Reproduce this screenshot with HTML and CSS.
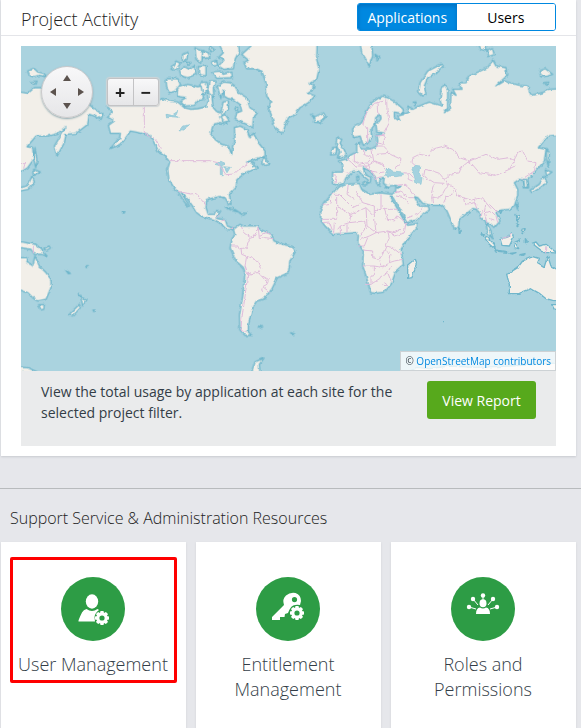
FILE: index.html
```html
<!DOCTYPE html>
<html lang="en">
<head>
<meta charset="utf-8">
<title>Project Activity</title>
<link rel="stylesheet" href="styles.css">
</head>
<body>
<main>
<section class="panel">
  <header class="panel-head">
    <h2>Project Activity</h2>
    <div class="toggle">
      <button type="button" class="active">Applications</button>
      <button type="button">Users</button>
    </div>
  </header>
  <div class="panel-body">
    <div class="map">
      <svg class="world" viewBox="0 0 1605 975" role="img" aria-label="World map">
        <defs>
          <filter id="coast" x="0" y="0" width="1605" height="975" filterUnits="userSpaceOnUse">
            <feTurbulence type="fractalNoise" baseFrequency="0.07" numOctaves="2" seed="4"/>
            <feDisplacementMap in="SourceGraphic" scale="10" xChannelSelector="R" yChannelSelector="G"/>
          </filter>
        </defs>
        <rect class="sea" width="1605" height="975"/>
        <g filter="url(#coast)">
        <g class="land">
          <!-- North America -->
          <path d="M260 182L275 198L258 212L280 225L262 238L268 262L298 262L296 275L268 308L300 295L318 270L328 255L345 258L372 265L388 270L400 292L412 315L428 325L446 348L440 370L443 400L462 430L472 437L485 460L502 484L506 482L490 456L480 438L500 460L520 488L527 500L540 510L567 518L582 522L602 535L617 550L634 552L640 550L637 546L619 540L613 522L595 518L585 515L599 495L585 494L579 505L562 505L555 485L557 460L582 455L597 452L612 455L622 472L630 475L625 445L645 425L647 402L672 380L687 375L710 366L697 358L700 350L677 348L707 338L732 332L732 315L712 290L697 262L687 275L677 250L657 240L640 245L642 285L635 300L632 325L622 300L602 295L582 280L569 265L577 235L597 230L618 235L602 205L622 190L622 165L606 168L600 200L586 196L577 185L572 145L559 140L562 165L557 182L530 188L510 190L490 185L470 168L445 165L425 158L400 165L300 150L275 165Z"/>
          <!-- Eurasia, eastern edge -->
          <path d="M-20 135L20 142L40 125L60 125L150 150L205 175L218 188L245 205L240 220L220 210L205 205L200 235L165 262L135 265L130 290L108 330L100 300L115 275L135 242L110 262L80 270L45 270L18 302L35 305L38 340L20 365L-20 390Z"/>
          <!-- Eurasia and Africa -->
          <path d="M1085 150L1077 153L1052 170L1032 205L1022 230L995 245L997 275L1017 270L1027 298L1042 290L1052 270L1049 250L1062 235L1064 215L1077 205L1080 215L1065 235L1067 258L1090 261L1068 268L1070 285L1067 300L1052 308L1027 310L1017 304L1018 288L1007 295L1007 318L987 328L977 338L952 345L965 355L965 378L935 378L934 412L949 418L967 412L975 395L987 385L997 375L1012 375L1027 390L1042 402L1040 412L1048 408L1049 398L1030 380L1027 365L1047 375L1062 392L1067 412L1075 418L1077 400L1090 394L1087 412L1100 420L1125 418L1123 440L1112 445L1077 440L1047 445L1022 430L1015 412L977 415L949 425L932 445L907 475L899 490L899 522L912 540L937 565L977 562L1007 560L1012 570L1010 590L1027 615L1025 660L1035 690L1049 740L1065 742L1090 738L1110 715L1125 675L1147 655L1140 610L1155 585L1190 540L1187 533L1160 538L1150 525L1130 490L1108 450L1116 452L1140 495L1157 530L1185 522L1225 492L1222 481L1195 480L1180 452L1190 455L1205 472L1230 478L1260 478L1275 490L1280 500L1300 548L1313 542L1315 520L1355 488L1370 490L1380 515L1393 525L1400 560L1415 578L1410 555L1397 530L1410 535L1420 545L1437 525L1425 500L1440 492L1465 490L1480 480L1490 450L1490 430L1480 410L1495 400L1505 402L1510 425L1523 425L1520 398L1540 380L1570 345L1575 310L1552 305L1580 270L1625 266L1625 128L1585 130L1565 140L1530 148L1520 120L1495 118L1450 105L1425 120L1457 90L1455 65L1425 60L1415 42L1400 65L1345 90L1335 110L1315 110L1320 130L1295 130L1305 148L1290 138L1288 190L1270 200L1280 186L1280 130L1270 115L1260 130L1257 160L1263 180L1225 168L1195 180L1175 190L1160 180L1165 198L1150 205L1130 210L1137 225L1120 215L1120 198L1145 203L1147 190L1125 170L1100 155Z"/>
          <!-- Greenland and Atlantic islands -->
          <g transform="translate(537 0)">
            <path d="M125 25L153 0L160 -20L352 -20L350 40L357 70L350 100L330 112L345 125L322 140L345 150L325 170L300 185L285 205L265 215L255 240L248 262L235 255L222 238L215 210L205 185L212 168L200 150L198 110L185 75L165 68L140 68L132 50L145 42Z"/>
            <path d="M332 205L345 212L370 200L378 212L360 230L340 228L345 218Z"/>
            <path d="M412 275L425 280L420 292L432 310L440 328L412 335L420 318L412 305L408 290ZM398 305L410 303L408 325L392 327Z"/>
            <path d="M480 -10H515L518 30L507 60L495 35L485 20ZM525 25L540 35L530 45Z"/>
            <path d="M185 350L190 332L210 355L195 358Z"/>
            <path d="M52 120L70 108L90 110L105 120L115 140L140 155L150 185L172 200L160 215L158 245L140 235L105 220L110 200L125 195L120 175L100 160L85 158L72 150L70 130L62 158Z"/>
            <path d="M0 110L20 108L25 130L10 145L0 138ZM30 105L48 105L40 125L42 155L25 140Z"/>
            <path d="M55 -10H115L118 15L105 40L100 68L70 70L55 60L72 42L56 34L70 20Z"/>
            <path d="M35 78L60 75L70 85L95 78L97 95L50 97ZM-5 62L18 60L18 90L-4 85ZM0 12L25 20L30 35L5 38ZM30 0L42 10L32 18ZM35 48L50 42L52 58L40 60ZM105 186L113 184L112 194L106 193ZM62 212L76 205L88 225L70 228Z"/>
            <path d="M470 392L476 390L476 403L471 404ZM488 410L500 408L500 416L490 416Z"/>
          </g>
          <!-- Canadian archipelago -->
          <path d="M435 98L470 98L478 115L465 135L445 140L437 125ZM470 125L500 115L530 122L540 120L548 160L530 165L520 178L490 180L478 165L495 155L468 150Z"/>
          <path d="M450 70L465 45L478 52L465 72ZM475 70L490 62L505 70L520 60L525 85L500 95L480 90ZM485 25L500 18L498 40L484 50ZM522 5L545 15L542 50L525 40ZM495 48L510 50L500 58Z"/>
          <path d="M20 75L40 68L50 78L68 82L78 92L55 88L40 92L25 90ZM30 108L45 105L42 115Z"/>
          <path d="M42 305L48 345L44 365L38 340ZM38 370L58 378L40 388ZM33 390L40 408L22 430L-20 438V428L20 420Z"/>
          <!-- Russian Arctic and Japan -->
          <g transform="translate(1065 0)">
            <path d="M140 150L128 138L132 110L155 75L195 55L202 60L180 80L155 95L145 120L150 145Z"/>
            <path d="M512 310L520 320L517 362L512 340ZM508 372L528 378L512 390ZM505 390L512 410L485 430L468 440L462 433L490 415ZM442 400L450 400L456 425L446 422ZM420 475L426 474L424 490Z"/>
            <path d="M305 -10H330L332 15L315 10ZM335 12L348 5L355 25L338 32ZM490 75L508 68L530 85L515 90L495 92ZM505 110L518 108L512 118ZM0 30L8 38L0 45ZM112 168L120 168L118 178Z"/>
            <path d="M25 420L40 423L30 426ZM62 424L72 420L66 427Z"/>
          </g>
          <!-- South America and Caribbean -->
          <g transform="translate(537 480)">
            <path d="M100 70L120 55L130 60L170 60L180 70L215 85L222 105L250 115L280 122L287 135L270 165L265 200L232 215L215 250L190 280L170 285L160 300L155 320L150 335L145 360L145 378L155 388L135 388L120 372L118 330L128 270L135 200L130 185L108 165L90 125L95 105L104 85Z"/>
            <path d="M76 3L100 8L116 18L95 13ZM118 20L138 22L130 28ZM175 360L188 363L178 366ZM272 380L284 384L276 386Z"/>
            <path d="M155 500L165 468L192 456L178 475L180 500Z"/>
          </g>
          <!-- Western Pacific -->
          <g transform="translate(0 480)">
            <path d="M-20 108H5L25 112L45 115L60 130L78 150L60 145L40 145L30 130L-20 122ZM68 130L84 120L88 126L76 133Z"/>
            <path d="M-20 155H20L18 170L35 178L42 150L55 180L75 200L90 220L90 245L75 280L50 285L35 275L20 260L-20 245Z"/>
            <path d="M53 296L70 296L68 310L60 312ZM172 262L182 275L198 280L185 300L182 284ZM175 295L178 305L155 330L145 325ZM134 192L148 202L142 203ZM304 18H311L308 22ZM194 179H202L196 185ZM216 312H219V317Z"/>
            <path d="M-20 483L20 485L55 500H-20Z"/>
          </g>
          <!-- Australia and the Indian Ocean -->
          <g transform="translate(1065 480)">
            <path d="M392 205L425 185L440 165L470 152L490 158L485 170L505 182L515 150L525 180L560 200V285L530 283L510 278L490 262L465 248L430 262L400 263L400 235Z"/>
            <path d="M468 112L480 108L490 120L510 115L535 135L560 142L525 140L505 140L485 125ZM372 98L390 95L408 80L412 95L400 120L378 118ZM315 80L330 90L355 115L358 130L340 115ZM358 132L395 138L395 142L360 138ZM402 142L420 140L410 144ZM432 146L450 142L438 148Z"/>
            <path d="M420 25L430 30L425 48ZM435 70L448 68L442 80ZM420 55L428 58L424 62ZM415 110L430 102L420 114L428 128L415 125ZM248 65L256 75L250 80ZM118 160L122 170L108 215L95 217L95 180ZM370 14L378 14L374 22ZM448 98L454 106L448 110ZM527 296H560V308L535 310ZM200 347H204"/>
            <path d="M90 500L125 484L160 488L220 480L300 484L400 480L560 470V500Z"/>
          </g>
        </g>
        <g class="lake">
          <path d="M1093 388L1100 366L1115 375L1145 378L1148 388L1125 392L1100 390Z"/>
          <path d="M1173 370L1183 358L1197 360L1193 380L1203 395L1200 415L1185 412L1180 390Z"/>
          <path d="M438 205L452 208L470 196L464 210L472 214L450 212L440 216ZM474 255L485 240L506 236L490 248Z"/>
          <path d="M582 355L598 346L612 355L600 360ZM598 362H604V386H598ZM608 362L628 364L618 380Z"/>
        </g>
        <g class="border">
          <path d="M370 150V262L385 272L405 280L418 308M446 344H565L590 350L615 386L640 384L652 372L672 362L680 348M472 436L508 444L525 442L540 460L555 478"/>
          <!-- Central and South America -->
          <path d="M585 515L595 508M602 525L612 520M637 542L634 552M661 540L668 560L688 575L676 605L660 608L662 625L680 632M688 575L700 570L712 545M712 545L715 578L732 575L757 578M715 570L735 560L750 565M632 600L650 600L655 610M677 630L672 660L680 685L690 680M680 632L712 645L722 668L712 680L724 690L742 700L738 715L725 722L748 740M680 685L708 680L712 672M680 685L675 730L668 780L662 820L660 850L678 858M724 735L722 725M712 680L735 705"/>
          <!-- Europe -->
          <path d="M1040 290V245L1025 235L1037 200L1060 172L1090 165M1068 172L1070 200L1077 205M1097 160L1098 190L1105 230L1090 260M936 386L946 388L942 412M965 378L985 382M978 338L992 350L1007 365M1000 322V345L1015 355L1040 350L1052 335L1028 325V310M1052 308L1058 345L1090 360M1010 360L1040 360L1062 345L1085 352L1095 370M1040 350L1050 375L1075 380L1090 378M1030 360L1055 380L1062 395M1065 270L1090 268V295L1065 290M1065 300L1085 300L1108 325L1140 340L1135 355L1122 365M1067 325L1105 322M1060 398L1085 392"/>
          <!-- Asia -->
          <path d="M1173 350L1175 335L1195 325L1225 330L1232 310L1270 300L1295 310L1315 335L1345 345L1375 380L1425 388L1465 370L1480 345L1465 335L1430 340L1395 325L1345 345L1320 365L1315 380L1285 385L1270 400L1280 415L1305 430L1310 450L1350 462L1385 455L1395 470L1410 488M1465 370L1485 360M1480 345L1490 318L1505 315L1520 345L1545 350L1540 375L1510 395L1505 402M1208 390L1212 370L1235 375L1255 382L1270 400M1208 390L1240 410L1270 412M1232 455L1240 415M1232 455L1235 475M1232 455L1260 452L1272 430L1290 412M1268 470L1275 455L1295 440L1305 430M1173 350L1182 358M1148 380L1165 382L1178 395M1160 385L1162 400L1175 405M1125 418L1155 415L1165 430L1180 452M1125 440L1140 435L1165 455L1178 455M1125 450L1150 455L1162 470M1158 516L1190 505L1205 485M1330 455L1335 475L1360 470L1368 488M1360 460L1365 475M1395 470L1390 500L1398 530M1395 500L1410 495L1425 510L1430 530M1405 475L1430 500M1385 490L1380 515M1405 520L1420 525M1442 578L1460 572L1472 565"/>
          <!-- Africa -->
          <path d="M982 418L978 445L1000 460M932 445H955L995 485L1025 470L1005 435M932 455L930 475L905 478M947 450V520L900 520M947 480L990 505L1035 485L1060 510V480L1025 470M1060 495L1080 490V445M1080 490H1130M990 505L985 530L960 538L950 550M905 530L925 528L935 555M940 530L938 560M958 540V562M978 535V560M985 530L1030 525L1035 545L1015 570M1035 485L1038 540M1038 540L1065 560L1100 555L1120 560L1140 550M1060 510L1065 560M1090 490L1100 520L1120 525L1130 510L1155 530L1150 560L1120 570L1100 555M1020 580L1045 570L1065 560M1012 600L1030 600L1040 575M1027 612L1055 615V635L1075 640L1085 625L1095 600L1105 575L1100 555M1095 600L1115 605L1140 625M1025 660H1060L1085 665L1105 650L1110 625L1095 615M1060 660V690H1050V715L1035 715M1050 715L1080 695L1100 680L1110 660M1100 680L1110 705M1085 665L1075 640M1105 650L1120 645L1145 640M1090 710L1097 715L1090 722L1085 715"/>
          <path d="M0 350H12L8 368M37 595V622M1574 600V622"/>
        </g>
        </g>
      </svg>
      <div class="map-controls">
        <div class="pan">
          <button type="button" class="up" aria-label="Pan up"></button>
          <button type="button" class="left" aria-label="Pan left"></button>
          <button type="button" class="right" aria-label="Pan right"></button>
          <button type="button" class="down" aria-label="Pan down"></button>
        </div>
        <div class="zoom">
          <button type="button">+</button>
          <button type="button">−</button>
        </div>
      </div>
      <div class="credit">© <a href="#">OpenStreetMap contributors</a></div>
    </div>
    <div class="report">
      <p>View the total usage by application at each site for the selected project filter.</p>
      <button type="button">View Report</button>
    </div>
  </div>
</section>
<section class="resources">
  <h2>Support Service &amp; Administration Resources</h2>
  <div class="cards">
    <div class="card">
      <a class="tile selected" href="#">
        <svg class="icon" viewBox="0 0 64 64" aria-hidden="true">
          <circle class="disc" cx="32" cy="32" r="32"/>
          <ellipse cx="31" cy="24.500" rx="6.200" ry="7.200"/>
          <path d="M17.500 44.500Q17 43.500 21 35.500Q22.500 32.500 25.500 32Q31 35.800 36.500 32L38 33Q34 36 33.500 40L34 44.500Z"/>
          <g transform="translate(41 41)">
            <use href="#gear"/>
          </g>
        </svg>
        <span>User Management</span>
      </a>
    </div>
    <div class="card">
      <a class="tile" href="#">
        <svg class="icon" viewBox="0 0 64 64" aria-hidden="true">
          <defs>
            <g id="gear">
              <path fill-rule="evenodd" d="M-1.500-7H1.500L2-4.900L3.900-6L6-3.900L4.900-2L7-1.500V1.500L4.900 2L6 3.900L3.900 6L2 4.900L1.500 7H-1.500L-2 4.900L-3.900 6L-6 3.900L-4.900 2L-7 1.500V-1.500L-4.900-2L-6-3.900L-3.900-6L-2-4.900ZM0-2.600A2.600 2.600 0 1 0 0 2.600A2.600 2.600 0 1 0 0-2.600Z"/>
            </g>
          </defs>
          <circle class="disc" cx="32" cy="32" r="32"/>
          <path fill-rule="evenodd" d="M16 43V40L28 28Q26 22 30 18.500Q34 15 39.500 16Q45 18 45 24L44 28Q37 27 34.500 31Q33 33 32 36L29 37L28.500 40H24V43ZM38.500 20A2.600 2.600 0 1 0 38.500 25.200A2.600 2.600 0 1 0 38.500 20Z"/>
          <use href="#gear" transform="translate(41 36)"/>
        </svg>
        <span>Entitlement Management</span>
      </a>
    </div>
    <div class="card">
      <a class="tile" href="#">
        <svg class="icon" viewBox="0 0 64 64" aria-hidden="true">
          <circle class="disc" cx="32" cy="32" r="32"/>
          <path class="spokes" d="M32 18V23M22 22L27 28M42 22L37 28M18 30L25 32M46 30L39 32"/>
          <circle cx="32" cy="18.500" r="2.200"/><circle cx="22" cy="22" r="2.200"/><circle cx="42" cy="22" r="2.200"/><circle cx="18" cy="30" r="2.200"/><circle cx="46" cy="30" r="2.200"/>
          <ellipse cx="32" cy="26.300" rx="3.500" ry="4"/>
          <path d="M25 37Q25 31 29 30.500Q32 32.500 35 30.500Q39 31 39 37Z"/>
        </svg>
        <span>Roles and Permissions</span>
      </a>
    </div>
  </div>
</section>
</main>
</body>
</html>
```
FILE: styles.css
```css
* { box-sizing: border-box; }
body {
  margin: 0;
  background: #e6e7eb;
  color: #333d47;
  font: 14px/21px "Open Sans", sans-serif;
}
button { font: inherit; cursor: pointer; }
h2 {
  margin: 0;
  font-size: 18px;
  font-weight: 300;
  line-height: 24px;
  color: #222;
}
.panel {
  margin: 0 5px 0 1px;
  background: #fff;
  box-shadow: 0 1px 2px #c8cacf;
}
.panel-head {
  display: flex;
  justify-content: space-between;
  align-items: center;
  height: 36px;
  padding: 0 20px 2px;
  border-bottom: 1px solid #e4e5e9;
}
.panel-head h2 { padding-top: 4px; }
.toggle {
  display: flex;
  width: 199px;
  height: 28px;
  border: 1px solid #0088e0;
  border-radius: 3px;
  overflow: hidden;
}
.toggle button {
  flex: 1;
  padding: 2px 0 0;
  border: 0;
  background: #fff;
  color: #000;
}
.toggle .active {
  background: #0088e0;
  color: #fff;
  box-shadow: inset 0 2px 4px #0070c0;
}
.panel-body { padding: 10px 20px; }
.map {
  position: relative;
  overflow: hidden;
  background: #aad3df;
}
.world { display: block; width: 100%; }
.sea { fill: #aad3df; }
.land path {
  fill: #f2efe9;
  stroke: #6fb6cb;
  stroke-width: 4;
  stroke-linejoin: round;
}
.lake path { fill: #a4d2df; stroke: #8cc5d5; stroke-width: 2; }
.border path { fill: none; stroke: #dfbcdb; stroke-width: 3; }
.map-controls {
  position: absolute;
  top: 20px;
  left: 20px;
  display: flex;
  align-items: center;
  gap: 14px;
}
.pan {
  display: grid;
  grid-template: repeat(3, 14px) / repeat(3, 14px);
  place-content: center;
  place-items: center;
  width: 52px;
  height: 52px;
  border: 1px solid #c9c9cb;
  border-radius: 50%;
  background: linear-gradient(#f8f8f9, #e6e6e8);
  box-shadow: 0 1px 2px #8fa9b0;
}
.pan button {
  width: 8px;
  height: 6px;
  padding: 0;
  border: 0;
  background: #5c534e;
}
.pan .up { grid-area: 1 / 2; clip-path: polygon(50% 0, 100% 100%, 0 100%); }
.pan .down { grid-area: 3 / 2; clip-path: polygon(0 0, 100% 0, 50% 100%); }
.pan .left { grid-area: 2 / 1; width: 6px; height: 8px; clip-path: polygon(0 50%, 100% 0, 100% 100%); }
.pan .right { grid-area: 2 / 3; width: 6px; height: 8px; clip-path: polygon(0 0, 100% 50%, 0 100%); }
.zoom {
  display: flex;
  width: 52px;
  height: 28px;
  border: 1px solid #c3c3c5;
  border-radius: 3px;
  background: linear-gradient(#f8f8f9, #e6e6e8);
  box-shadow: 0 0 1px 1px #d0d4d6;
}
.zoom button {
  flex: 1;
  padding: 0;
  border: 0;
  background: none;
  color: #222;
  font-size: 18px;
  font-weight: 700;
  line-height: 24px;
}
.zoom button + button { border-left: 1px solid #c3c3c5; }
.credit {
  position: absolute;
  right: 0;
  bottom: 0;
  padding: 0 4px;
  border: 1px solid #cdd2d5;
  background: rgba(255, 255, 255, 0.8);
  font-size: 10px;
  line-height: 18px;
}
a { color: #0088e0; text-decoration: none; }
.report {
  display: flex;
  justify-content: space-between;
  align-items: flex-start;
  gap: 20px;
  min-height: 75px;
  padding: 10px 20px;
  background: #eaebec;
}
.report p { flex: 1; margin: 0; }
.report button {
  width: 109px;
  height: 38px;
  padding: 0;
  border: 0;
  border-radius: 3px;
  background: #57a91c;
  color: #fff;
}
.resources {
  margin-top: 32px;
  border-top: 1px solid #b8bbbd;
}
.resources h2 { padding: 17px 10px 12px; font-size: 16px; }
.cards {
  display: grid;
  grid-template-columns: repeat(3, 1fr);
  gap: 10px;
  margin: 0 5px 0 1px;
}
.card {
  min-height: 196px;
  padding: 15px 9px;
  background: #fff;
  box-shadow: 0 1px 2px #cfd1d6;
}
.tile {
  display: flex;
  flex-direction: column;
  align-items: center;
  gap: 11px;
  padding: 17px 1px 3px 0;
  border: 3px solid transparent;
  border-radius: 2px;
  color: #333d47;
  font-size: 18px;
  font-weight: 300;
  line-height: 25px;
  text-align: center;
}
.tile.selected { border-color: #f00; }
.tile span { max-width: 150px; }
.icon { width: 64px; height: 64px; fill: #fff; }
.disc { fill: #2d9c45; }
.spokes { fill: none; stroke: #fff; stroke-width: 1; }
```
